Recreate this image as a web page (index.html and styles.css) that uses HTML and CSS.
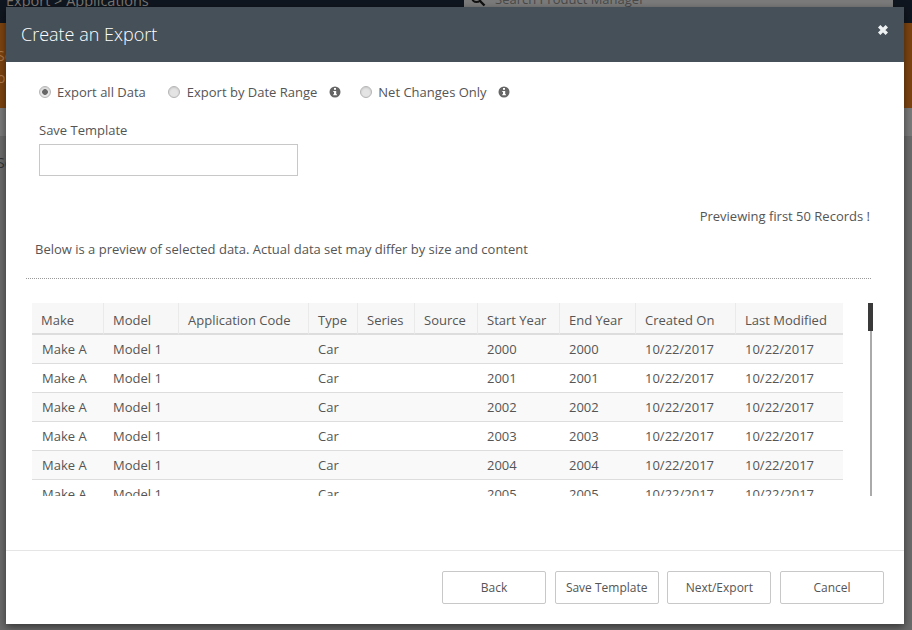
FILE: index.html
```html
<!DOCTYPE html>
<html lang="en">
<head>
<meta charset="utf-8">
<title>Create an Export</title>
<link rel="stylesheet" href="styles.css">
</head>
<body>
<div class="page">
  <div class="topbar">
    <div class="crumb">Export &gt; Applications</div>
    <div class="search">
      <svg class="search-icon" viewBox="0 0 16 16" width="16" height="16"><circle cx="6.5" cy="6.5" r="4.5" fill="none" stroke="#111" stroke-width="2"/><path d="M10 10l4.500 4.500" stroke="#111" stroke-width="2.400"/></svg>
      <span>Search Product Manager</span>
    </div>
  </div>
  <div class="band"><span class="band-a">Sc</span><span class="band-b">or</span></div>
  <div class="strip"></div>
  <div class="rest"><span class="rest-a">Sc</span></div>
</div>
<div class="modal">
  <div class="modal-head">
    <h1>Create an Export</h1>
    <svg class="close" viewBox="0 0 12 12" width="12" height="12"><path d="M2.200 2.200l7.600 7.600M9.800 2.200l-7.600 7.600" stroke="#eef1f2" stroke-width="3.400"/></svg>
  </div>
  <div class="modal-body">
    <div class="radios">
      <label class="radio"><span class="dot on"></span>Export all Data</label>
      <label class="radio r2"><span class="dot"></span>Export by Date Range<svg class="info" viewBox="0 0 12 12" width="12" height="12"><circle cx="6" cy="6" r="5.500" fill="#666"/><rect x="5" y="2" width="2" height="1.800" fill="#fff"/><path d="M4.300 5h2.900v3.300h.8v1H4.200v-1H5V6H4.300z" fill="#fff"/></svg></label>
      <label class="radio r3"><span class="dot"></span>Net Changes Only<svg class="info" viewBox="0 0 12 12" width="12" height="12"><circle cx="6" cy="6" r="5.500" fill="#666"/><rect x="5" y="2" width="2" height="1.800" fill="#fff"/><path d="M4.300 5h2.900v3.300h.8v1H4.200v-1H5V6H4.300z" fill="#fff"/></svg></label>
    </div>
    <div class="tmpl-label">Save Template</div>
    <div class="tmpl-input"></div>
    <div class="preview-note">Previewing first 50 Records !</div>
    <div class="below">Below is a preview of selected data. Actual data set may differ by size and content</div>
    <div class="rule"></div>
    <div class="table-wrap">
      <div class="table-clip">
        <table>
          <thead>
            <tr><th class="c1">Make</th><th class="c2">Model</th><th class="c3">Application Code</th><th class="c4">Type</th><th class="c5">Series</th><th class="c6">Source</th><th class="c7">Start Year</th><th class="c8">End Year</th><th class="c9">Created On</th><th class="c10">Last Modified</th></tr>
          </thead>
          <tbody>
            <tr><td>Make A</td><td>Model 1</td><td></td><td>Car</td><td></td><td></td><td>2000</td><td>2000</td><td>10/22/2017</td><td>10/22/2017</td></tr>
            <tr><td>Make A</td><td>Model 1</td><td></td><td>Car</td><td></td><td></td><td>2001</td><td>2001</td><td>10/22/2017</td><td>10/22/2017</td></tr>
            <tr><td>Make A</td><td>Model 1</td><td></td><td>Car</td><td></td><td></td><td>2002</td><td>2002</td><td>10/22/2017</td><td>10/22/2017</td></tr>
            <tr><td>Make A</td><td>Model 1</td><td></td><td>Car</td><td></td><td></td><td>2003</td><td>2003</td><td>10/22/2017</td><td>10/22/2017</td></tr>
            <tr><td>Make A</td><td>Model 1</td><td></td><td>Car</td><td></td><td></td><td>2004</td><td>2004</td><td>10/22/2017</td><td>10/22/2017</td></tr>
            <tr><td>Make A</td><td>Model 1</td><td></td><td>Car</td><td></td><td></td><td>2005</td><td>2005</td><td>10/22/2017</td><td>10/22/2017</td></tr>
          </tbody>
        </table>
      </div>
      <div class="scrollbar"><div class="thumb"></div></div>
    </div>
  </div>
  <div class="modal-foot">
    <button class="btn">Back</button>
    <button class="btn">Save Template</button>
    <button class="btn">Next/Export</button>
    <button class="btn">Cancel</button>
  </div>
</div>
</body>
</html>
```
FILE: styles.css
```css
* { box-sizing: border-box; }
html, body { margin: 0; padding: 0; height: 100%; overflow: hidden; }
body { font-family: "Open Sans", sans-serif; font-size: 13px; color: #555; background: #666; }

.page { height: 630px; display: flex; flex-direction: column; }
.topbar { height: 23px; background: #10161f; display: flex; justify-content: space-between; overflow: hidden; flex: none; }
.crumb { font-size: 14.500px; line-height: 15px; margin: -7px 0 0 6px; color: #7a7570; }
.search { width: 429px; height: 7px; margin: 0 19px 0 0; background: #7b7b7b; display: flex; gap: 9px; padding-left: 6px; color: #4a4a4a; font-size: 13px; line-height: 7px; overflow: hidden; }
.search-icon { margin-top: -9px; flex: none; }
.search span { margin-top: -4px; }
.band { height: 85px; background: #7d4410; display: flex; flex-direction: column; color: #b07a4a; font-size: 14px; line-height: 16px; padding-top: 25px; flex: none; }
.band-a, .band-b { display: block; margin-left: -3px; }
.band-b { margin-top: 6px; }
.strip { height: 29px; flex: none; background: #7a7a7a; border-bottom: 1px solid #6a6a6a; }
.rest { flex: 1; background: #6b6b6b; color: #333; font-size: 14px; line-height: 16px; padding-top: 18px; }
.rest-a { display: block; margin-left: -3px; }

.modal { position: absolute; left: 6px; top: 7px; width: 898px; height: 617px; background: #fff; box-shadow: 0 3px 8px rgba(0,0,0,.5); display: flex; flex-direction: column; }
.modal-head { height: 55px; flex: none; background: #465058; display: flex; align-items: center; justify-content: space-between; padding: 0 15px; }
.modal-head h1 { margin: -2px 0 0 0; font-size: 18px; font-weight: 300; color: #fff; }
.close { margin-top: -10px; }

.modal-body { flex: 1; padding: 0 0 0 20px; min-height: 0; }
.radios { display: flex; align-items: center; height: 18px; margin: 21px 0 0 13px; }
.radio { display: flex; align-items: center; }
.r2 { margin-left: 22px; }
.r2 .dot { margin-right: 7px; }
.r3 { margin-left: 19px; }
.dot { width: 12px; height: 12px; border-radius: 50%; margin-right: 6px; background: #e4e4e4; border: 1px solid #b5b5b5; box-shadow: inset 0 1px 2px rgba(0,0,0,.12); flex: none; }
.dot.on { background: radial-gradient(circle, #666 0, #666 2.500px, #e8e8e8 3.200px); }
.info { margin-left: 12px; }
.r3 .info { margin-left: 11px; }
.tmpl-label { margin: 20px 0 0 13px; line-height: 18px; }
.tmpl-input { width: 259px; height: 32px; margin: 5px 0 0 13px; border: 1px solid #c8c8c8; background: #fff; }
.preview-note { margin: 31px 34px 0 0; text-align: right; line-height: 18px; }
.below { margin: 15px 0 0 9px; line-height: 18px; }
.rule { width: 845px; margin: 20px 0 0 0; border-top: 1px dotted #999; }

.table-wrap { display: flex; margin: 24px 0 0 6px; }
.table-clip { width: 811px; height: 193px; overflow: hidden; flex: none; }
table { width: 811px; border-collapse: separate; border-spacing: 0; table-layout: fixed; }
th { height: 32px; font-weight: 400; text-align: left; padding: 4px 0 0 9px; background: #f7f7f7; border-bottom: 2px solid #ddd; border-right: 1px solid #eaeaea; white-space: nowrap; }
th:last-child { border-right: 0; }
td { height: 29px; padding: 0 0 0 9px; border-bottom: 1px solid #ddd; white-space: nowrap; }
td:first-child { padding-left: 10px; }
tbody tr:nth-child(odd) td { background: #f9f9f9; }
.c1 { width: 72px; } .c2 { width: 75px; } .c3 { width: 130px; } .c4 { width: 49px; } .c5 { width: 57px; }
.c6 { width: 63px; } .c7 { width: 82px; } .c8 { width: 76px; } .c9 { width: 100px; } .c10 { width: 107px; }
.scrollbar { width: 5px; height: 193px; margin-left: 25px; flex: none; background: linear-gradient(#aaa,#aaa) center / 2px 100% no-repeat; }
.thumb { width: 5px; height: 28px; background: #3a3a3a; }

.modal-foot { height: 74px; flex: none; border-top: 1px solid #e5e5e5; display: flex; justify-content: flex-end; gap: 8.670px; padding: 20px 20px 0 0; }
.btn { width: 104px; height: 33px; background: #fff; border: 1px solid #c8c8c8; border-radius: 2px; font: 400 12px "Open Sans", sans-serif; color: #555; padding: 0; }
```
